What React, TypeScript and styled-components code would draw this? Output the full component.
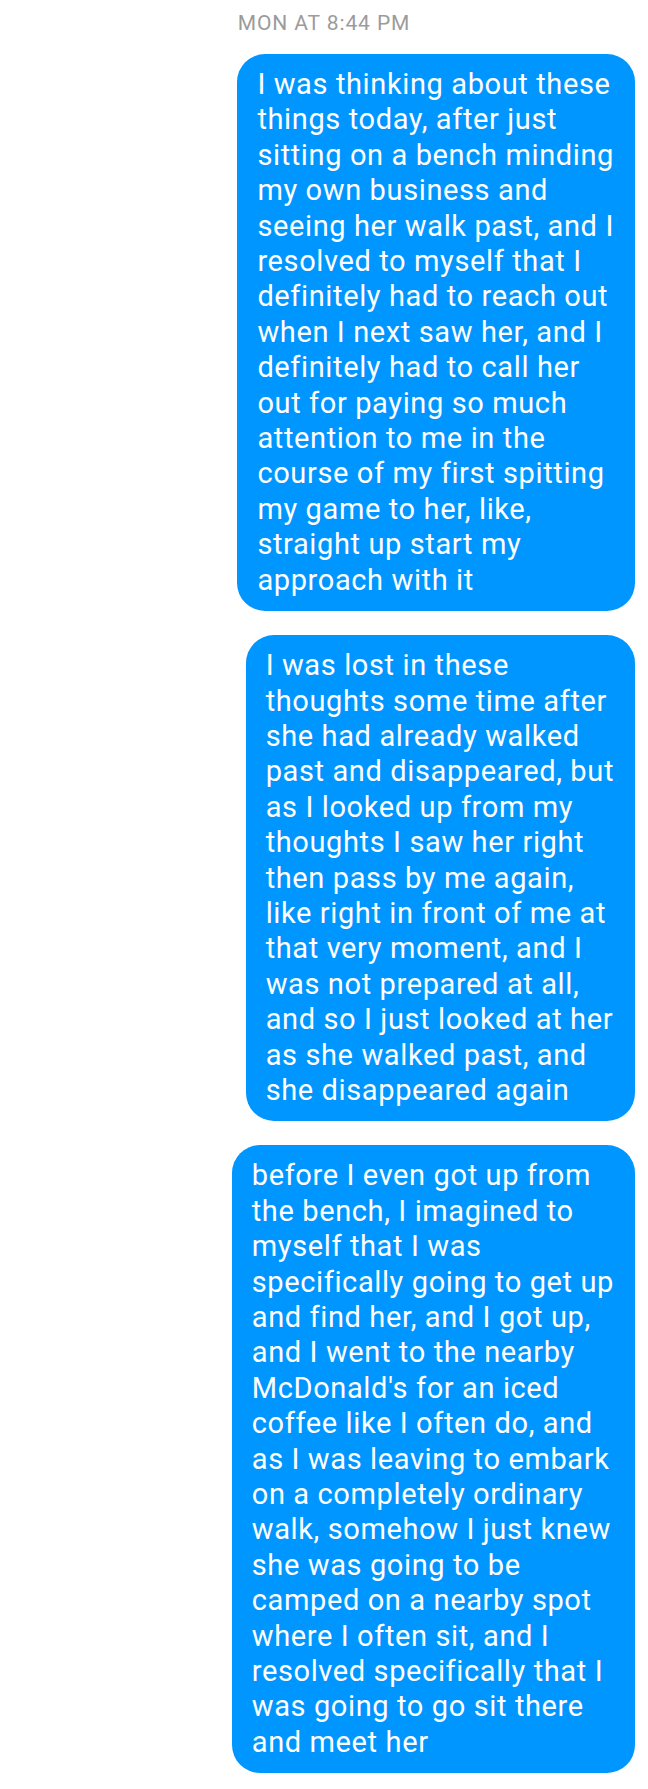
import React from 'react';
import styled, { createGlobalStyle } from 'styled-components';

const GlobalStyle = createGlobalStyle`
  html, body {
    margin: 0;
    padding: 0;
    background: #ffffff;
  }
`;

const Thread = styled.div`
  display: flex;
  flex-direction: column;
  width: 648px;
  padding-bottom: 16px;
  font-family: Roboto, 'Noto Sans', sans-serif;
`;

const Timestamp = styled.div`
  padding-top: 11px;
  margin-bottom: 19px;
  font-size: 21px;
  line-height: 24px;
  color: #9b9b9b;
  text-align: center;
  letter-spacing: 0.9px;
`;

const Messages = styled.div`
  display: flex;
  flex-direction: column;
  align-items: flex-end;
  gap: 24px;
  padding-right: 13px;
`;

const Bubble = styled.div`
  background: #0096ff;
  color: #ffffff;
  border-radius: 28px;
  padding: 13px 21px 13px 20px;
  font-size: 29px;
  line-height: 35.4px;
  letter-spacing: 0.62px;
  white-space: nowrap;
  width: fit-content;
`;

interface Message {
    id: number;
    lines: string[];
}

const messages: Message[] = [
    {
        id: 1,
        lines: [
            'I was thinking about these',
            'things today, after just',
            'sitting on a bench minding',
            'my own business and',
            'seeing her walk past, and I',
            'resolved to myself that I',
            'definitely had to reach out',
            'when I next saw her, and I',
            'definitely had to call her',
            'out for paying so much',
            'attention to me in the',
            'course of my first spitting',
            'my game to her, like,',
            'straight up start my',
            'approach with it',
        ],
    },
    {
        id: 2,
        lines: [
            'I was lost in these',
            'thoughts some time after',
            'she had already walked',
            'past and disappeared, but',
            'as I looked up from my',
            'thoughts I saw her right',
            'then pass by me again,',
            'like right in front of me at',
            'that very moment, and I',
            'was not prepared at all,',
            'and so I just looked at her',
            'as she walked past, and',
            'she disappeared again',
        ],
    },
    {
        id: 3,
        lines: [
            'before I even got up from',
            'the bench, I imagined to',
            'myself that I was',
            'specifically going to get up',
            'and find her, and I got up,',
            'and I went to the nearby',
            "McDonald's for an iced",
            'coffee like I often do, and',
            'as I was leaving to embark',
            'on a completely ordinary',
            'walk, somehow I just knew',
            'she was going to be',
            'camped on a nearby spot',
            'where I often sit, and I',
            'resolved specifically that I',
            'was going to go sit there',
            'and meet her',
        ],
    },
];

export default function App() {
    return (
        <>
            <GlobalStyle />
            <Thread>
                <Timestamp>MON AT 8:44 PM</Timestamp>
                <Messages>
                    {messages.map((m) => (
                        <Bubble key={m.id}>
                            {m.lines.map((line, i) => (
                                <React.Fragment key={i}>
                                    {line}
                                    {i < m.lines.length - 1 && <br />}
                                </React.Fragment>
                            ))}
                        </Bubble>
                    ))}
                </Messages>
            </Thread>
        </>
    );
}
